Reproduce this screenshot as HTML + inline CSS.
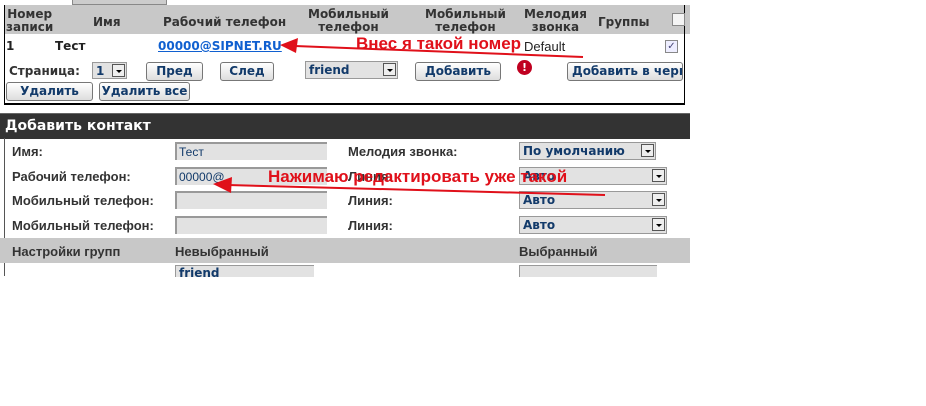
<!DOCTYPE html>
<html><head><meta charset="utf-8"><style>
body{margin:0;width:926px;height:406px;background:#fff;position:relative;overflow:hidden;font-family:"DejaVu Sans","Liberation Sans",sans-serif;font-size:12px;color:#222}
.a{position:absolute;white-space:nowrap}
b{font-weight:bold}
.btn{position:absolute;height:17px;border:1px solid #777;border-radius:3px;background:linear-gradient(#fff,#ddd);font-weight:bold;color:#123a6a;font-size:12px;text-align:center;line-height:17px;white-space:nowrap}
.inp{position:absolute;height:18px;background:#e2e2e2;border-top:2px solid #999;border-left:2px solid #999;box-sizing:border-box;font-size:12px;color:#123a6a;line-height:16px;padding-left:2px;font-family:"Liberation Sans",sans-serif}
.sel{position:absolute;height:18px;background:#e2e2e2;border:1px solid #999;box-sizing:border-box;font-weight:bold;color:#123a6a;line-height:16px;padding-left:3px;white-space:nowrap}
.sel i{position:absolute;right:1px;top:1px;width:13px;height:13px;background:#eee;border:1px solid #555;box-sizing:border-box}
.sel i:after{content:"";position:absolute;left:3px;top:5px;border-left:3px solid transparent;border-right:3px solid transparent;border-top:3px solid #000}
.lbl{position:absolute;font-weight:bold;color:#333;font-family:"Liberation Sans",sans-serif;font-size:13px;white-space:nowrap}
.red{position:absolute;color:#e0101a;font-weight:bold;font-family:"Liberation Sans",sans-serif;font-size:17px;white-space:nowrap}
</style></head><body>
<div class="a" style="left:72px;top:0;width:93px;height:4px;background:#ccc;border:1px solid #888;border-top:0"></div>
<div class="a" style="left:4px;top:5px;width:686px;height:29px;background:#c8c8c8"></div>
<div class="a" style="left:4px;top:5px;width:679px;height:98px;border-left:1px solid #000;border-right:1px solid #000;border-bottom:2px solid #000"></div>
<div class="a" style="left:6px;top:8px;line-height:13px;font-weight:bold;color:#333;text-align:center">Номер<br>записи</div>
<div class="a" style="left:93px;top:15px;font-weight:bold;color:#333">Имя</div>
<div class="a" style="left:163px;top:15px;font-weight:bold;color:#333">Рабочий телефон</div>
<div class="a" style="left:308px;top:8px;line-height:13px;font-weight:bold;color:#333;text-align:center">Мобильный<br>телефон</div>
<div class="a" style="left:425px;top:8px;line-height:13px;font-weight:bold;color:#333;text-align:center">Мобильный<br>телефон</div>
<div class="a" style="left:524px;top:8px;line-height:13px;font-weight:bold;color:#333;text-align:center">Мелодия<br>звонка</div>
<div class="a" style="left:598px;top:15px;font-weight:bold;color:#333">Группы</div>
<div class="a" style="left:672px;top:13px;width:11px;height:11px;border:1px solid #888;background:#f4f4f4"></div>
<div class="a" style="left:6px;top:39px;font-weight:bold">1</div>
<div class="a" style="left:55px;top:39px;font-weight:bold">Тест</div>
<div class="a" style="left:158px;top:39px;font-weight:bold;color:#1060d0;text-decoration:underline">00000@SIPNET.RU</div>
<div class="a" style="left:524px;top:39px;font-size:13px;font-family:'Liberation Sans',sans-serif">Default</div>
<div class="a" style="left:665px;top:40px;width:11px;height:11px;border:1px solid #888;background:#eef;color:#447;font-size:10px;line-height:11px;text-align:center">✓</div>
<div class="a" style="left:9px;top:64px;font-weight:bold;color:#333">Страница:</div>
<div class="sel" style="left:92px;top:62px;width:35px;height:17px">1<i></i></div>
<div class="btn" style="left:146px;top:62px;width:55px">Пред</div>
<div class="btn" style="left:220px;top:62px;width:52px">След</div>
<div class="sel" style="left:305px;top:61px;width:93px">friend<i></i></div>
<div class="btn" style="left:415px;top:62px;width:84px">Добавить</div>
<div class="a" style="left:517px;top:60px;width:15px;height:15px;border-radius:50%;background:#c00020;color:#fff;font-size:11px;line-height:15px;text-align:center;font-weight:bold">!</div>
<div class="btn" style="left:567px;top:62px;width:116px;overflow:hidden;text-align:left;padding-left:4px;box-sizing:border-box;height:19px">Добавить в черн</div>
<div class="btn" style="left:6px;top:82px;width:85px">Удалить</div>
<div class="btn" style="left:99px;top:82px;width:89px">Удалить все</div>

<div class="a" style="left:0;top:113px;width:690px;height:25px;background:#333;border-top:1px solid #666"></div>
<div class="a" style="left:5px;top:118px;color:#fff;font-weight:bold;font-size:14px">Добавить контакт</div>
<div class="a" style="left:4px;top:138px;width:1px;height:138px;background:#555"></div>
<div class="lbl" style="left:12px;top:144px">Имя:</div>
<div class="lbl" style="left:12px;top:169px">Рабочий телефон:</div>
<div class="lbl" style="left:12px;top:193px">Мобильный телефон:</div>
<div class="lbl" style="left:12px;top:218px">Мобильный телефон:</div>
<div class="inp" style="left:175px;top:142px;width:152px">Тест</div>
<div class="inp" style="left:175px;top:167px;width:152px">00000@</div>
<div class="inp" style="left:175px;top:191px;width:152px"></div>
<div class="inp" style="left:175px;top:216px;width:152px"></div>
<div class="lbl" style="left:348px;top:144px">Мелодия звонка:</div>
<div class="lbl" style="left:348px;top:169px">Линия:</div>
<div class="lbl" style="left:348px;top:193px">Линия:</div>
<div class="lbl" style="left:348px;top:218px">Линия:</div>
<div class="sel" style="left:519px;top:142px;width:137px">По умолчанию<i></i></div>
<div class="sel" style="left:519px;top:167px;width:148px">Авто<i></i></div>
<div class="sel" style="left:519px;top:191px;width:148px">Авто<i></i></div>
<div class="sel" style="left:519px;top:216px;width:148px">Авто<i></i></div>
<div class="a" style="left:0;top:238px;width:690px;height:25px;background:#c8c8c8"></div>
<div class="lbl" style="left:12px;top:244px">Настройки групп</div>
<div class="lbl" style="left:175px;top:244px">Невыбранный</div>
<div class="lbl" style="left:519px;top:244px">Выбранный</div>
<div class="a" style="left:175px;top:265px;width:135px;height:11px;background:#e2e2e2;border-top:1px solid #999;border-left:1px solid #999;overflow:hidden;font-weight:bold;color:#123a6a;font-size:12px;line-height:14px;padding-left:3px">friend</div>
<div class="a" style="left:519px;top:265px;width:137px;height:11px;background:#e2e2e2;border-top:1px solid #999;border-left:1px solid #999"></div>

<svg class="a" style="left:0;top:0" width="926" height="406">
<line x1="583" y1="57" x2="295" y2="46" stroke="#e0101a" stroke-width="2"/>
<polygon points="280,45 298,38 296,53" fill="#e0101a"/>
<line x1="605" y1="195" x2="228" y2="185" stroke="#e0101a" stroke-width="2"/>
<polygon points="213,184 232,177 231,193" fill="#e0101a"/>
</svg>
<div class="red" style="left:356px;top:34px">Внес я такой номер</div>
<div class="red" style="left:268px;top:167px">Нажимаю редактировать уже такой</div>
</body></html>
